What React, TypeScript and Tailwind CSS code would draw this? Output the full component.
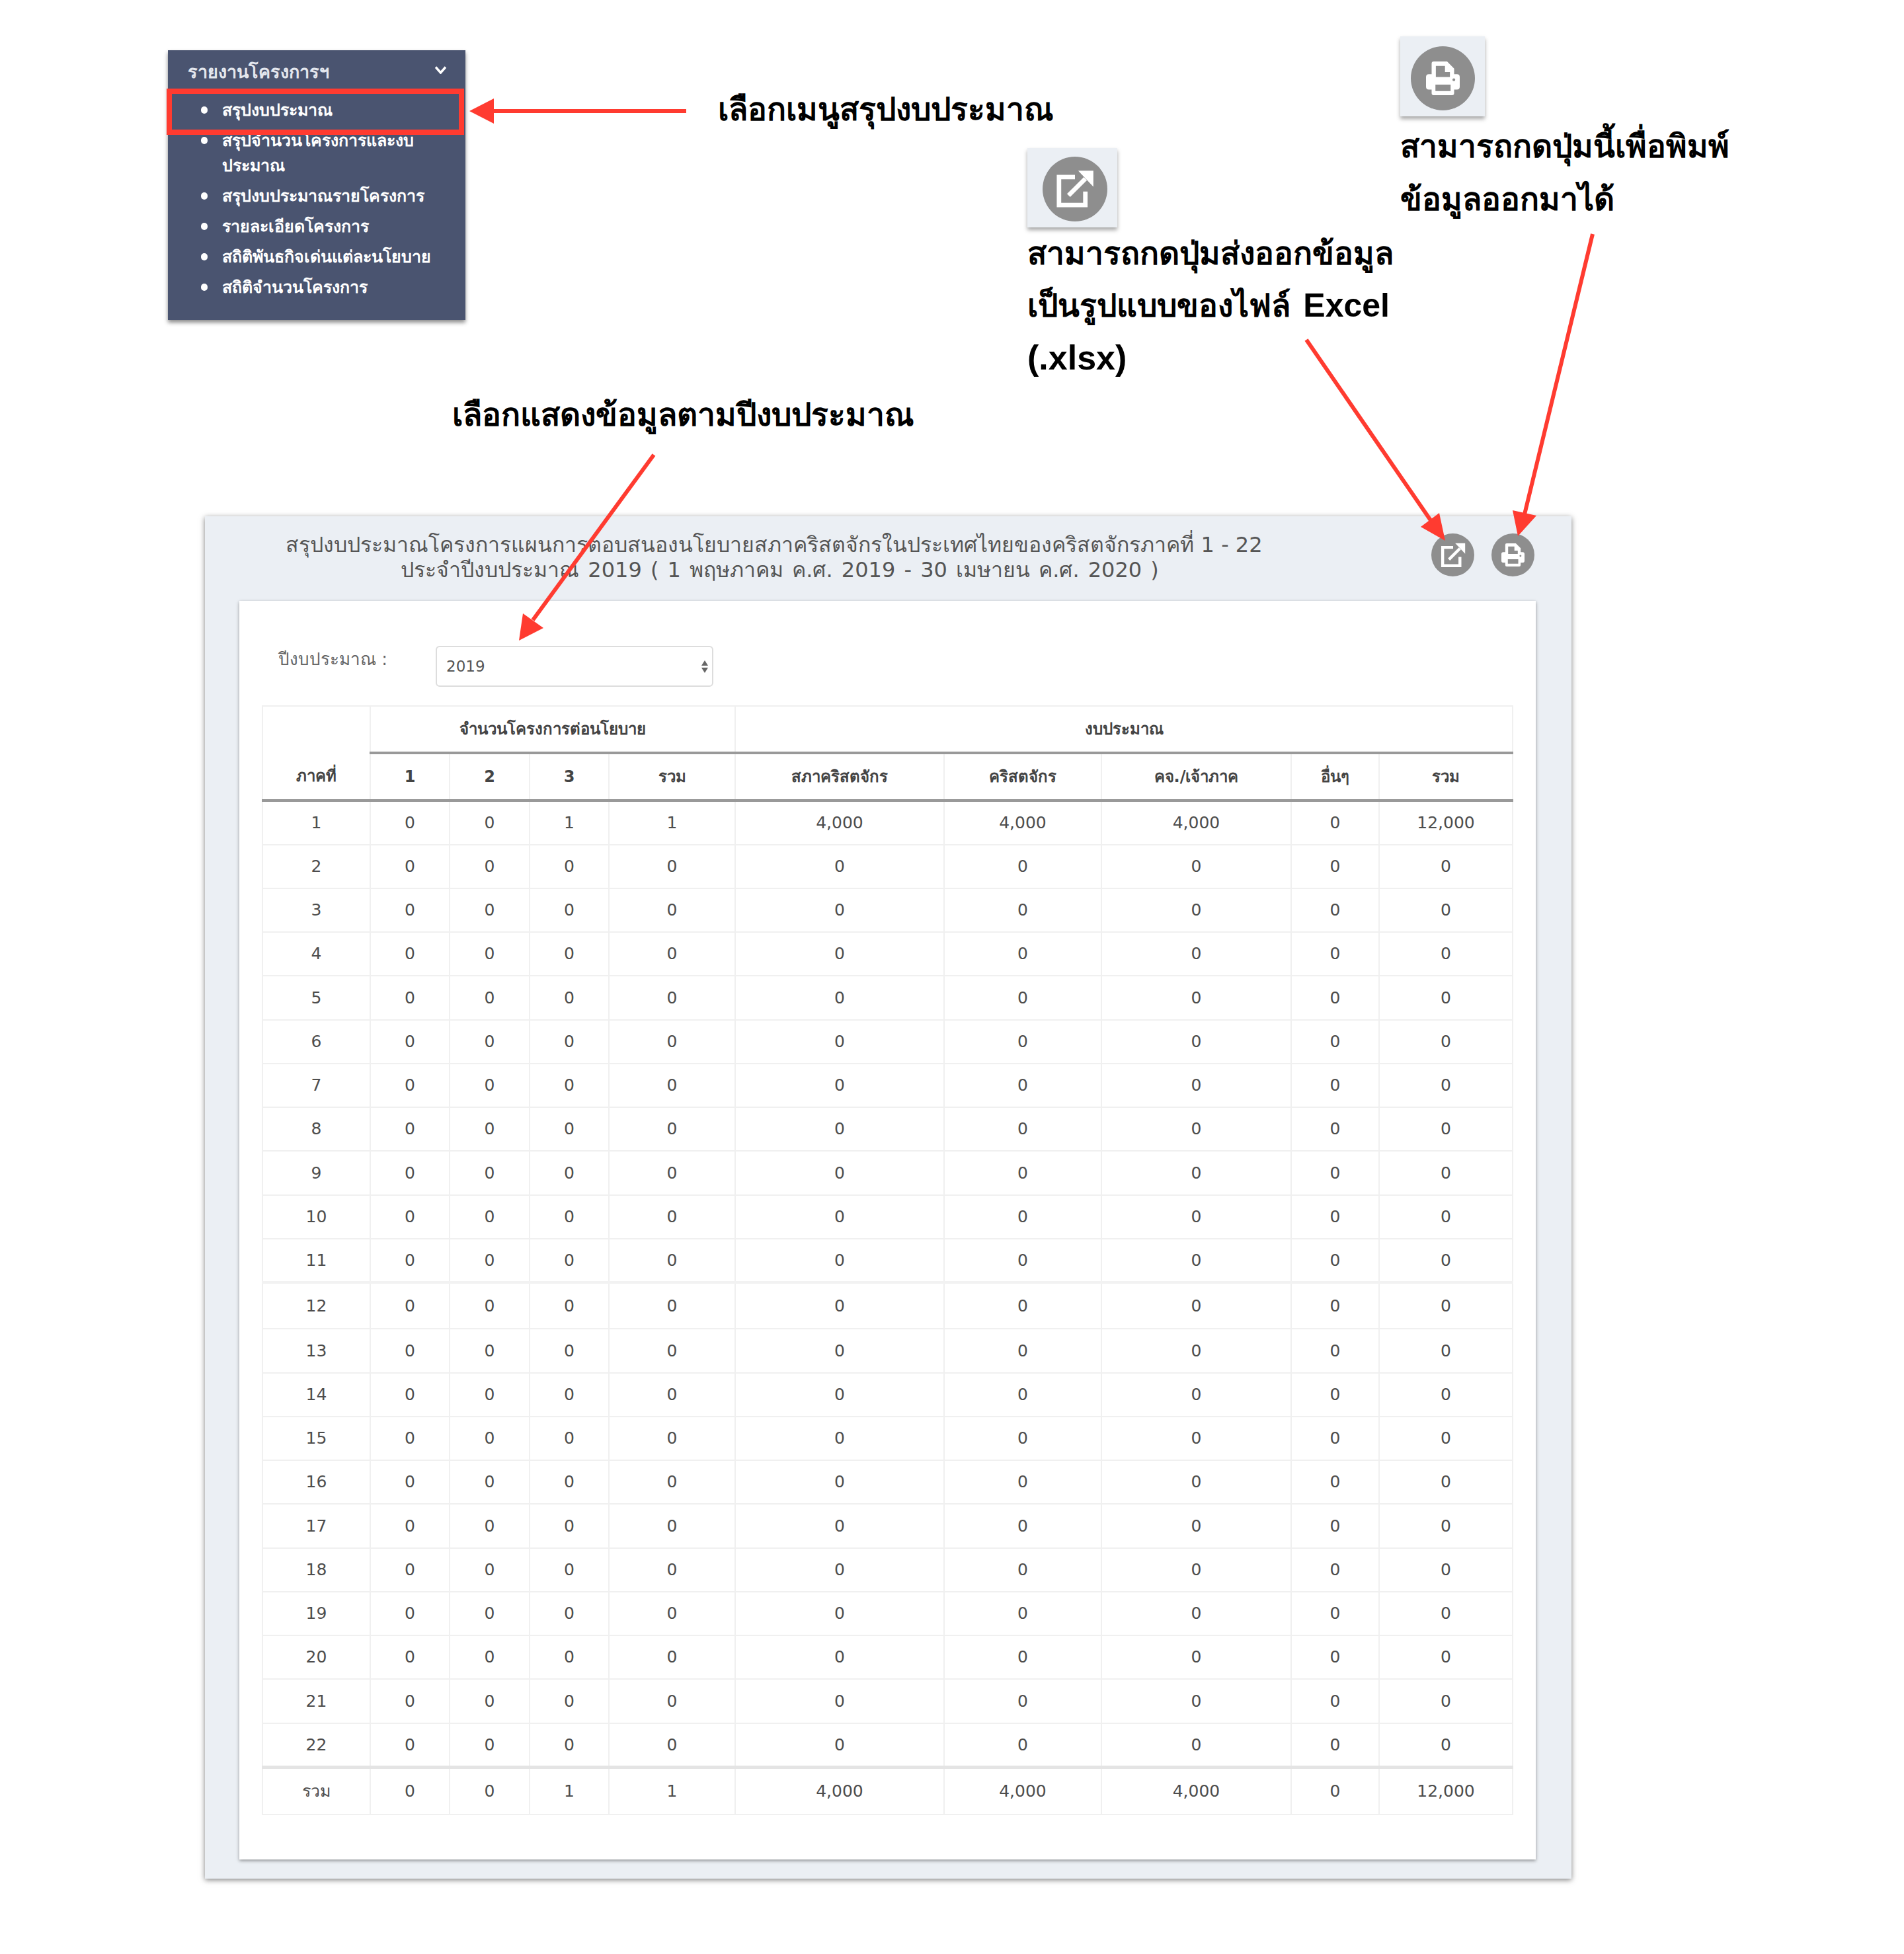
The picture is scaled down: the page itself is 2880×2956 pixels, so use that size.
const menuItems = [
  "สรุปงบประมาณ",
  "สรุปจำนวนโครงการและงบประมาณ",
  "สรุปงบประมาณรายโครงการ",
  "รายละเอียดโครงการ",
  "สถิติพันธกิจเด่นแต่ละนโยบาย",
  "สถิติจำนวนโครงการ",
];

const firstRow = ["0", "0", "1", "1", "4,000", "4,000", "4,000", "0", "12,000"];
const emptyRow = ["0", "0", "0", "0", "0", "0", "0", "0", "0"];
const rows = Array.from({ length: 22 }, (_, i) => i + 1);

function ExportIcon({ className }: { className: string }) {
  return (
    <svg viewBox="0 0 24 24" className={className} fill="none">
      <path d="M12 4.5H2V22H18.5V13.5" stroke="white" strokeWidth="2.8" />
      <path d="M8 16L18.5 5.5" stroke="white" strokeWidth="2.8" />
      <path d="M14 0.5H23.5V10.5Z" fill="white" />
    </svg>
  );
}

function PrintIcon({ className }: { className: string }) {
  return (
    <svg viewBox="0 0 24 24" className={className}>
      <path
        fillRule="evenodd"
        fill="white"
        d="M4 1.5Q4 0 5.5 0H15L20 5V9H22Q24 9 24 11V18Q24 20 22 20H20V22.5Q20 24 18.5 24H5.5Q4 24 4 22.5V20H2Q0 20 0 18V11Q0 9 2 9H4ZM7 3.2V11H17V7.5H13.5V3.2ZM6.7 16.5V21H17.5V16.5Z"
      />
      <circle cx="19.8" cy="13" r="1" fill="#8e8e8e" />
    </svg>
  );
}

function Arrows() {
  return (
    <svg viewBox="0 0 2880 2956" className="absolute inset-0 z-10 h-[2956px] w-[2880px] pointer-events-none">
      <g stroke="#ff3b30" strokeWidth="6">
        <line x1="1038" y1="168" x2="745" y2="168" />
        <line x1="989" y1="688" x2="806" y2="938" />
        <line x1="1976" y1="514" x2="2166" y2="790" />
        <line x1="2409" y1="354" x2="2306" y2="778" />
      </g>
      <g fill="#ff3b30">
        <polygon points="710,168 747,149 747,187" />
        <polygon points="785,969 791,928 822,950" />
        <polygon points="2186,818 2177,776 2149,797" />
        <polygon points="2296,811 2288,772 2324,780" />
      </g>
    </svg>
  );
}

function Cell({ children, className = "" }: { children: React.ReactNode; className?: string }) {
  return <td className={"border-2 border-[#f0f0f0] text-center " + className}>{children}</td>;
}

function HeadCell({ children }: { children: React.ReactNode }) {
  return <th className="border-x-2 border-x-[#f0f0f0] border-b-4 border-b-[#999999] text-center font-bold">{children}</th>;
}

export default function App() {
  return (
    <div className="relative h-[2956px] w-[2880px] overflow-hidden bg-white font-['DejaVu_Sans','Noto_Sans',sans-serif]">
      <Arrows />

      {/* top part: menu crop + notes */}
      <div className="relative h-[781px]">
        <div className="absolute left-[254px] top-[76px] h-[408px] w-[450px] bg-[#4a5470] text-white shadow-[0_4px_6px_rgba(0,0,0,0.45)]">
          <div className="flex h-[66px] items-center justify-between pl-[30px] pr-[29px] text-[27px] font-bold text-[#e4e7ee]">
            <span>รายงานโครงการฯ</span>
            <svg viewBox="0 0 17 12" className="mb-[6px] h-[12px] w-[17px]" fill="none">
              <path d="M1 1.5L8.5 10L16 1.5" stroke="white" strokeWidth="3.5" />
            </svg>
          </div>
          <ul className="pl-[50px] pr-[30px] pt-[6px] text-[25px] font-bold leading-[38px]">
            {menuItems.map((item, i) => (
              <li key={item} className="flex items-start gap-[22px] pb-[8px]">
                <span className="mt-[13px] h-[11px] w-[10px] shrink-0 rounded-full bg-white" />
                <span>
                  {i === 1 ? (
                    <>
                      สรุปจำนวนโครงการและงบ
                      <br />
                      ประมาณ
                    </>
                  ) : (
                    item
                  )}
                </span>
              </li>
            ))}
          </ul>
        </div>
        <div className="absolute left-[252px] top-[134px] h-[70px] w-[450px] border-[8px] border-[#ff3b30]" />

        <p className="absolute left-[1086px] top-[130px] font-['Liberation_Sans','DejaVu_Sans',sans-serif] text-[48px] font-bold leading-[72px] text-black">เลือกเมนูสรุปงบประมาณ</p>

        <div className="absolute left-[2118px] top-[55px] flex h-[121px] w-[128px] items-center justify-center bg-[#ebeff4] pt-[6px] shadow-[0_4px_6px_rgba(0,0,0,0.35)]">
          <div className="flex h-[97px] w-[97px] items-center justify-center rounded-full bg-[#8e8e8e]">
            <PrintIcon className="h-[51px] w-[51px]" />
          </div>
        </div>
        <p className="absolute left-[2118px] top-[182px] font-['Liberation_Sans','DejaVu_Sans',sans-serif] text-[48px] font-bold leading-[80px] text-black">
          สามารถกดปุ่มนี้เพื่อพิมพ์
          <br />
          ข้อมูลออกมาได้
        </p>

        <div className="absolute left-[1554px] top-[224px] flex h-[120px] w-[136px] items-center justify-center bg-[#ebeff4] pl-[8px] pt-[3px] shadow-[0_4px_6px_rgba(0,0,0,0.35)]">
          <div className="flex h-[98px] w-[98px] items-center justify-center rounded-full bg-[#8e8e8e]">
            <ExportIcon className="h-[58px] w-[58px]" />
          </div>
        </div>
        <p className="absolute left-[1554px] top-[344px] font-['Liberation_Sans','DejaVu_Sans',sans-serif] text-[48px] font-bold leading-[79px] text-black">
          สามารถกดปุ่มส่งออกข้อมูล
          <br />
          เป็นรูปแบบของไฟล์ <span className="ml-[6px] text-[50px]">Excel</span>
          <br />
          <span className="text-[52px]">(.xlsx)</span>
        </p>

        <p className="absolute left-[684px] top-[592px] font-['Liberation_Sans','DejaVu_Sans',sans-serif] text-[48px] font-bold leading-[72px] text-black">เลือกแสดงข้อมูลตามปีงบประมาณ</p>
      </div>

      {/* report panel */}
      <div className="ml-[310px] h-[2061px] w-[2067px] bg-[#ebeff4] shadow-[0_2px_8px_rgba(0,0,0,0.5)]">
        <div className="flex h-[128px] items-start">
          <div className="mt-[24px] w-[1722px] text-center text-[32px] leading-[38px] text-[#555555]">
            <p>สรุปงบประมาณโครงการแผนการตอบสนองนโยบายสภาคริสตจักรในประเทศไทยของคริสตจักรภาคที่ 1 - 22</p>
            <p className="pl-[17px] [word-spacing:3px]">ประจำปีงบประมาณ 2019 ( 1 พฤษภาคม ค.ศ. 2019 - 30 เมษายน ค.ศ. 2020 )</p>
          </div>
          <div className="ml-[133px] mt-[26px] flex gap-[26px]">
            <button className="flex h-[65px] w-[65px] items-center justify-center rounded-full bg-[#8e8e8e]">
              <ExportIcon className="h-[38px] w-[38px]" />
            </button>
            <button className="flex h-[65px] w-[65px] items-center justify-center rounded-full bg-[#8e8e8e]">
              <PrintIcon className="h-[35px] w-[35px]" />
            </button>
          </div>
        </div>

        <div className="ml-[52px] h-[1904px] w-[1961px] bg-white pl-[34px] pt-[68px] shadow-[0_2px_5px_rgba(0,0,0,0.4)]">
          <div className="flex h-[90px] items-start text-[#666666]">
            <span className="w-[263px] pl-[25px] text-[26px] leading-[40px]">ปีงบประมาณ :</span>
            <div className="flex h-[62px] w-[420px] items-center justify-between rounded-[6px] border-2 border-[#dddddd] pl-[14px] pr-[6px] text-[23px] text-[#555555]">
              <span>2019</span>
              <span className="flex flex-col gap-[3px]">
                <span className="h-0 w-0 border-x-[5px] border-b-[8px] border-x-transparent border-b-[#666666]" />
                <span className="h-0 w-0 border-x-[5px] border-t-[8px] border-x-transparent border-t-[#666666]" />
              </span>
            </div>
          </div>

          <table className="w-[1891px] table-fixed border-collapse text-[25px] text-[#4d4d4d]">
            <colgroup>
              <col className="w-[163px]" />
              <col className="w-[120px]" />
              <col className="w-[121px]" />
              <col className="w-[120px]" />
              <col className="w-[191px]" />
              <col className="w-[316px]" />
              <col className="w-[238px]" />
              <col className="w-[287px]" />
              <col className="w-[133px]" />
              <col className="w-[202px]" />
            </colgroup>
            <thead className="text-[24px] text-[#444444]">
              <tr className="h-[71px]">
                <th rowSpan={2} className="border-x-2 border-t-2 border-x-[#f0f0f0] border-t-[#f0f0f0] border-b-4 border-b-[#999999] pt-[70px] font-bold">ภาคที่</th>
                <th colSpan={4} className="border-x-2 border-t-2 border-x-[#f0f0f0] border-t-[#f0f0f0] border-b-4 border-b-[#999999] font-bold">จำนวนโครงการต่อนโยบาย</th>
                <th colSpan={5} className="border-x-2 border-t-2 border-x-[#f0f0f0] border-t-[#f0f0f0] border-b-4 border-b-[#999999] font-bold">งบประมาณ</th>
              </tr>
              <tr className="h-[72px]">
                <HeadCell>1</HeadCell>
                <HeadCell>2</HeadCell>
                <HeadCell>3</HeadCell>
                <HeadCell>รวม</HeadCell>
                <HeadCell>สภาคริสตจักร</HeadCell>
                <HeadCell>คริสตจักร</HeadCell>
                <HeadCell>คจ./เจ้าภาค</HeadCell>
                <HeadCell>อื่นๆ</HeadCell>
                <HeadCell>รวม</HeadCell>
              </tr>
            </thead>
            <tbody>
              {rows.map((n) => (
                <tr key={n} className={n === 12 ? "h-[70px]" : n % 4 === 1 ? "h-[67px]" : "h-[66px]"}>
                  <Cell className={n === 12 ? "border-t-4 border-t-[#f2f2f2]" : ""}>{n}</Cell>
                  {(n === 1 ? firstRow : emptyRow).map((v, i) => (
                    <Cell key={i} className={n === 12 ? "border-t-4 border-t-[#f2f2f2]" : ""}>{v}</Cell>
                  ))}
                </tr>
              ))}
              <tr className="h-[72px]">
                <Cell className="border-t-[5px] border-t-[#e4e4e4]">รวม</Cell>
                {firstRow.map((v, i) => (
                  <Cell key={i} className="border-t-[5px] border-t-[#e4e4e4]">{v}</Cell>
                ))}
              </tr>
            </tbody>
          </table>
        </div>
      </div>
    </div>
  );
}
